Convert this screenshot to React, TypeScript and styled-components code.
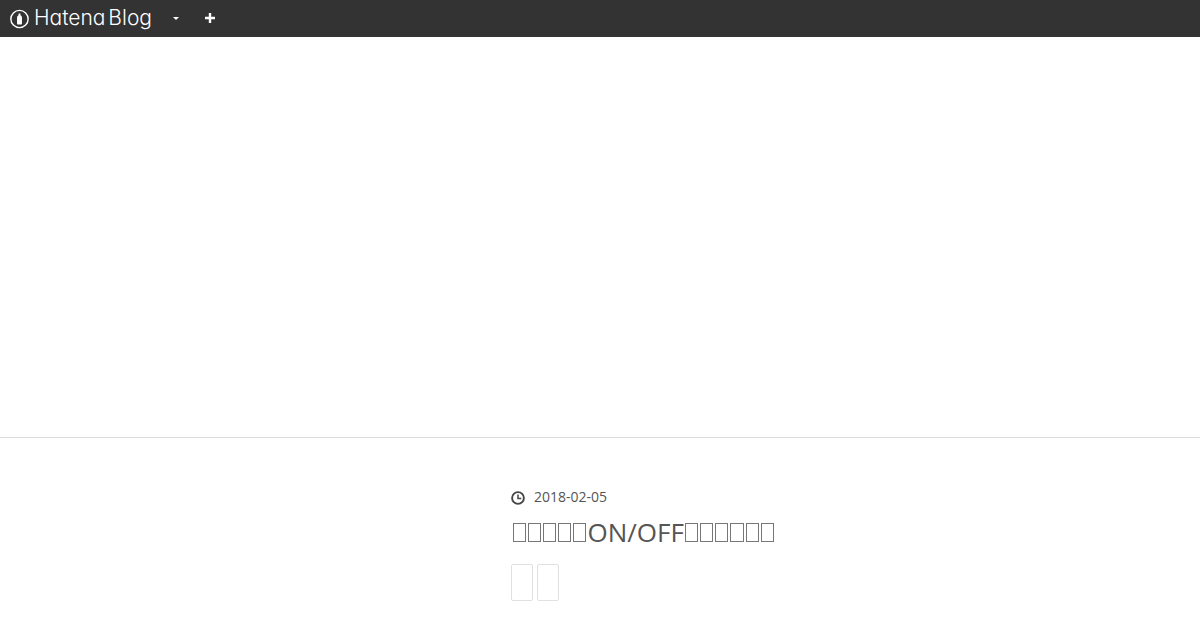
import styled, { createGlobalStyle } from "styled-components";

const GlobalStyle = createGlobalStyle`
  html, body {
    margin: 0;
    padding: 0;
    background: #fff;
    font-family: "Open Sans", "Liberation Sans", sans-serif;
    overflow: hidden;
  }
`;

const TopBar = styled.header`
  height: 37px;
  background: #333;
  display: flex;
  align-items: center;
  padding-left: 10px;
  color: #fff;
`;

const Brand = styled.div`
  display: flex;
  align-items: center;
  gap: 5px;
  width: 142px;
`;

const BrandName = styled.span`
  font-family: Inter, Lato, "Liberation Sans", sans-serif;
  font-feature-settings: "cv11";
  font-weight: 300;
  font-size: 21px;
  line-height: 35px;
  margin-bottom: 2px;
  letter-spacing: 0;
  word-spacing: -3px;
  color: #fff;
  white-space: nowrap;
`;

const Caret = styled.span`
  margin-left: 21px;
  width: 0;
  height: 0;
  border-left: 3px solid transparent;
  border-right: 3px solid transparent;
  border-top: 3px solid #fff;
`;

const PlusButton = styled.span`
  margin-left: 26px;
  display: flex;
  margin-bottom: 2px;
`;

const Hero = styled.div`
  height: 400px;
  border-bottom: 1px solid #ddd;
`;

const Article = styled.article`
  padding: 50px 0 0 511px;
  color: #555;
`;

const DateRow = styled.div`
  display: flex;
  align-items: center;
  gap: 9px;
  height: 18px;
  font-size: 14px;
  line-height: 18px;
`;

const ClockIcon = styled.svg`
  margin-top: 2px;
`;

const Title = styled.h1`
  margin: 10px 0 0;
  display: flex;
  align-items: center;
  height: 32px;
  padding-left: 0.5px;
  font-size: 26px;
  font-weight: 400;
  line-height: 32px;
`;

const Tofu = styled.span`
  box-sizing: border-box;
  width: 13.2px;
  height: 19px;
  margin: 0 1px;
  border: 1px solid #777;
`;

const Tags = styled.div`
  margin-top: 16px;
  display: flex;
  gap: 4px;
`;

const Tag = styled.span`
  box-sizing: border-box;
  width: 22px;
  height: 37px;
  border: 1px solid #e0e0e0;
  border-radius: 2px;
`;

const Logo = () => (
  <svg width="20" height="20" viewBox="0 0 20 20" fill="none">
    <circle cx="10" cy="10" r="9.1" stroke="#fff" strokeWidth="1.5" />
    <path
      d="M9 4.2h2v1.9c1.1.6 1.6 1.5 1.6 2.6V15a.8.8 0 0 1-.8.8H8.200a.8.8 0 0 1-.8-.8V8.700c0-1.100.5-2 1.600-2.600z"
      fill="#fff"
    />
  </svg>
);

const Plus = () => (
  <svg width="10" height="10" viewBox="0 0 10 10">
    <path d="M3.800 0h2.400v3.800H10v2.400H6.200V10H3.800V6.200H0V3.800h3.800z" fill="#fff" />
  </svg>
);

const Clock = () => (
  <ClockIcon width="14" height="14" viewBox="0 0 14 14" fill="none" stroke="#444">
    <circle cx="7" cy="7" r="5.900" strokeWidth="1.900" />
    <path d="M7 3.500V7.400H10.300" strokeWidth="1.500" />
  </ClockIcon>
);

const boxes = (n: number) =>
  Array.from({ length: n }, (_, i) => <Tofu key={i} />);

export default function App() {
  return (
    <>
      <GlobalStyle />
      <TopBar>
        <Brand>
          <Logo />
          <BrandName>Hatena Blog</BrandName>
        </Brand>
        <Caret />
        <PlusButton>
          <Plus />
        </PlusButton>
      </TopBar>
      <Hero />
      <Article>
        <DateRow>
          <Clock />
          <time>2018-02-05</time>
        </DateRow>
        <Title>
          {boxes(5)}
          ON/OFF
          {boxes(6)}
        </Title>
        <Tags>
          <Tag />
          <Tag />
        </Tags>
      </Article>
    </>
  );
}
